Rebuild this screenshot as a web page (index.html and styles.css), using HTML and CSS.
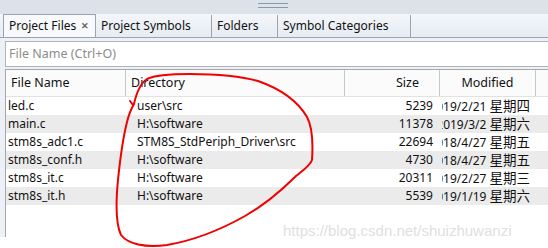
FILE: index.html
```html
<!DOCTYPE html>
<html lang="zh">
<head>
  <meta charset="UTF-8">
  <title>Project Files</title>
  <link rel="stylesheet" href="styles.css">
</head>
<body>

<div class="pane">
  <div class="topbar"><span class="grip"></span></div>

  <div class="tabs">
    <div class="tab active">Project Files <span class="close">&#x2715;</span></div>
    <div class="tab">Project Symbols</div>
    <div class="tab">Folders</div>
    <div class="tab">Symbol Categories</div>
  </div>

  <div class="body">
    <div class="search">File Name (Ctrl+O)</div>

    <div class="list">
      <div class="row head">
        <div class="cell">File Name</div>
        <div class="cell">Directory</div>
        <div class="cell num">Size</div>
        <div class="cell mid">Modified</div>
        <div class="cell"></div>
      </div>
      <div class="row">
        <div class="cell">led.c</div>
        <div class="cell dir">user\src</div>
        <div class="cell num">5239</div>
        <div class="cell date"><span>2019/2/21 <b>星期四</b></span></div>
      </div>
      <div class="row alt">
        <div class="cell">main.c</div>
        <div class="cell dir">H:\software</div>
        <div class="cell num">11378</div>
        <div class="cell date"><span>2019/3/2 <b>星期六</b></span></div>
      </div>
      <div class="row">
        <div class="cell">stm8s_adc1.c</div>
        <div class="cell dir">STM8S_StdPeriph_Driver\src</div>
        <div class="cell num">22694</div>
        <div class="cell date"><span>2018/4/27 <b>星期五</b></span></div>
      </div>
      <div class="row alt">
        <div class="cell">stm8s_conf.h</div>
        <div class="cell dir">H:\software</div>
        <div class="cell num">4730</div>
        <div class="cell date"><span>2018/4/27 <b>星期五</b></span></div>
      </div>
      <div class="row">
        <div class="cell">stm8s_it.c</div>
        <div class="cell dir">H:\software</div>
        <div class="cell num">20311</div>
        <div class="cell date"><span>2019/2/27 <b>星期三</b></span></div>
      </div>
      <div class="row alt">
        <div class="cell">stm8s_it.h</div>
        <div class="cell dir">H:\software</div>
        <div class="cell num">5539</div>
        <div class="cell date"><span>2019/1/19 <b>星期六</b></span></div>
      </div>
    </div>
  </div>
</div>

<!-- red marker scribble drawn over the screenshot -->
<svg class="scribble" width="548" height="248" viewBox="0 0 548 248">
  <path d="M130 101 L133 105
           M134 104 C136 95 139 84 147 79 C155 75 170 74 190 74 C215 74 240 76 258 81
           C278 88 297 100 307 117 C313 128 313 145 312 160 C310 166 302 171 296 176
           C284 188 268 203 245 216 C222 229 196 240 167 245 C145 248 128 244 121 235
           C115 222 116 200 118 180 C120 160 123 138 127 122 C129 114 131 109 134 104"
        fill="none" stroke="#f00000" stroke-width="2" stroke-linecap="round" stroke-linejoin="round"/>
</svg>

<div class="watermark">https://blog.csdn.net/shuizhuwanzi</div>

</body>
</html>
```

FILE: styles.css
```css
* {
  box-sizing: border-box;
  margin: 0;
  padding: 0;
}

body {
  width: 548px;
  height: 248px;
  overflow: hidden;
  background: #fff;
  font-family: "Noto Sans", "Noto Sans CJK SC", sans-serif;
  font-size: 12px;
  color: #111;
  position: relative;
}

.pane {
  height: 237px;
  display: flex;
  flex-direction: column;
  background: #e4e9ef;
}

.topbar {
  height: 14px;
  background: #dce2e9;
  display: flex;
  justify-content: center;
  padding-top: 3px;
  padding-right: 2px;
}

.grip {
  width: 30px;
  height: 5px;
  border-top: 1px solid #8e98a3;
  border-bottom: 1px solid #8e98a3;
}

.tabs {
  height: 24px;
  display: flex;
  align-items: flex-end;
  padding-left: 3px;
  background: linear-gradient(#f3f6fa, #e6ecf3);
  border-bottom: 1px solid #9ca5af;
}

.tab {
  height: 22px;
  line-height: 22px;
  padding: 0 6px 0 5px;
  border-right: 1px solid #9ca5af;
  white-space: nowrap;
}

.tab:nth-child(2) { width: 116px; }
.tab:nth-child(3) { width: 66px; }
.tab:nth-child(4) { width: 133px; }

.tab.active {
  width: 93px;
  border: 1px solid #9ca5af;
  border-bottom: none;
  background: #f7f9fc;
  height: 23px;
  line-height: 21px;
}

.close {
  font-size: 9px;
  font-weight: bold;
  color: #666;
  margin-left: 2px;
  position: relative;
  top: -1px;
}

.body {
  flex: 1;
  display: flex;
  flex-direction: column;
  padding: 3px 0 0 5px;
  background: #edf0f4;
}

.search {
  height: 26px;
  line-height: 24px;
  border: 1px solid #aeb4bb;
  border-right: none;
  background: #fff;
  padding-left: 3px;
  color: #8c8c8c;
  font-size: 12.5px;
  margin-bottom: 2px;
}

.list {
  flex: 1;
  background: #fff;
  border-left: 1px solid #a3a9b0;
}

.row {
  display: grid;
  grid-template-columns: 120px 219px 95px 96px 1fr;
  height: 18px;
  line-height: 18px;
}

.row.alt {
  background: #ebebeb;
}

.cell {
  padding-left: 2px;
  white-space: nowrap;
  overflow: hidden;
}

.cell.dir {
  padding-left: 11px;
}

.cell.num {
  text-align: right;
  padding-right: 7px;
}

.cell.date {
  display: flex;
  justify-content: flex-end;
  padding: 0 6px 0 0;
  margin-left: 2px;
}

.cell.date span {
  flex-shrink: 0;
}

.cell.date b {
  font-weight: normal;
  font-size: 13.5px;
}

.row.head {
  height: 28px;
  line-height: 26px;
  background: #fbfbfb;
  border-top: 1px solid #a8a8a8;
  border-bottom: 1px solid #e2e2e2;
  font-size: 12.5px;
}

.row.head .cell {
  border-right: 1px solid #c4c8cc;
  padding-left: 5px;
}

.row.head .cell.num {
  padding-right: 20px;
}

.row.head .cell.mid {
  text-align: center;
  padding-left: 0;
}

.row.head .cell:last-child {
  border-right: none;
}

.scribble {
  position: absolute;
  left: 0;
  top: 0;
}

.watermark {
  position: absolute;
  left: 283px;
  top: 222px;
  font-family: "Liberation Sans", sans-serif;
  font-size: 15px;
  color: #e0e0e0;
}
```
